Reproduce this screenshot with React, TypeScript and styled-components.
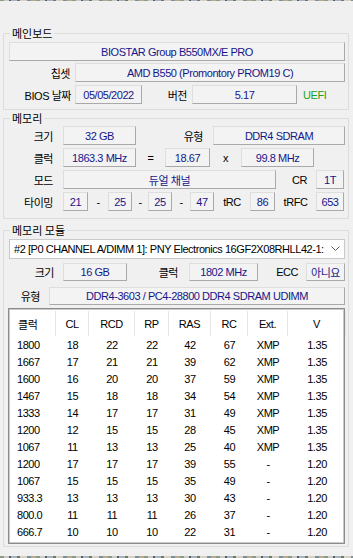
import React from "react";
import styled, { createGlobalStyle } from "styled-components";

const Global = createGlobalStyle`
  html, body { margin: 0; padding: 0; background: #f0f0f0; }
  body {
    font-family: "Liberation Sans", "Noto Sans CJK KR", sans-serif;
    font-size: 11px;
    letter-spacing: -0.45px;
    color: #000;
  }
  * { box-sizing: border-box; }
`;

const Page = styled.div`
  width: 353px;
  height: 558px;
  display: flex;
  flex-direction: column;
  overflow: hidden;
`;

const Strip = styled.div<{ $h: number }>`
  height: ${(p) => p.$h}px;
  flex: none;
  background: repeating-linear-gradient(
    90deg,
    #8f9a86 0 4px,
    #c9cbc4 4px 9px,
    #56606a 9px 11px,
    #a7b4bd 11px 17px,
    #6f7d5e 17px 20px,
    #d3d0c6 20px 27px,
    #7d8f99 27px 31px,
    #b8a98a 31px 36px
  );
`;

const Content = styled.div`
  flex: 1;
  display: flex;
  flex-direction: column;
  padding: 24px 4px 9px 3px;
`;

const Group = styled.fieldset<{ $mt?: number; $pt: number; $pb: number; $grow?: boolean }>`
  margin: ${(p) => p.$mt ?? 0}px 0 0 0;
  padding: ${(p) => p.$pt}px 3px ${(p) => p.$pb}px 5px;
  border: 1px solid #dcdcdc;
  min-width: 0;
  display: flex;
  flex-direction: column;
  ${(p) => (p.$grow ? "flex: 1; min-height: 0;" : "")}
`;

const Legend = styled.legend`
  padding: 0 2px;
  margin-left: 1px;
  line-height: 16px;
  height: 16px;
  font-family: "Noto Sans CJK KR", sans-serif;
  font-size: 11px;
  letter-spacing: 0;
  color: #000;
`;

const Row = styled.div<{ $h?: number; $mt?: number }>`
  display: flex;
  align-items: center;
  height: ${(p) => p.$h ?? 19}px;
  margin-top: ${(p) => p.$mt ?? 0}px;
  flex: none;
`;

const Field = styled.div<{ $w: number; $h?: number }>`
  width: ${(p) => p.$w}px;
  height: ${(p) => p.$h ?? 19}px;
  flex: none;
  display: flex;
  align-items: center;
  justify-content: center;
  background: #f3f3f3;
  border: 1px solid;
  border-color: #dedede #a9a9a9 #a9a9a9 #dedede;
  color: #16168a;
  white-space: nowrap;
  overflow: hidden;
`;

const Label = styled.span<{ $w: number; $align?: "left" | "center" | "right"; $pr?: number }>`
  width: ${(p) => p.$w}px;
  flex: none;
  text-align: ${(p) => p.$align ?? "right"};
  padding-right: ${(p) => p.$pr ?? 0}px;
  white-space: nowrap;
  color: #000;
`;

const Uefi = styled.span`
  margin-left: 6px;
  color: #1fa01f;
`;

const Select = styled.div`
  height: 20px;
  flex: none;
  display: flex;
  align-items: center;
  background: #fff;
  border: 1px solid #c9c9c9;
  padding-left: 4px;
`;

const SelectText = styled.span`
  flex: 1;
  min-width: 0;
  overflow: hidden;
  white-space: nowrap;
  color: #000;
`;

const Chevron = styled.svg`
  flex: none;
  margin: 0 4px 0 2px;
`;

const Table = styled.div`
  margin-top: 3px;
  margin-left: -1px;
  flex: 1;
  min-height: 0;
  background: #fff;
  border: 1px solid #8c8c8c;
  box-shadow: inset 0 0 0 1px #c8c8c8;
  padding: 1px;
  display: grid;
  grid-template-columns: 46px 33px 46px 34px 42px 37px 40px 58px;
  grid-auto-rows: 17px;
  grid-template-rows: 26px;
  align-content: start;
`;

const HeadCell = styled.div<{ $left?: boolean }>`
  display: flex;
  align-items: center;
  justify-content: ${(p) => (p.$left ? "flex-start" : "center")};
  padding-left: ${(p) => (p.$left ? 8 : 0)}px;
  border-right: 1px solid #e5e5e5;
  margin: 1px 0 0 0;
  white-space: nowrap;
`;

const Cell = styled.div<{ $left?: boolean }>`
  display: flex;
  align-items: center;
  justify-content: ${(p) => (p.$left ? "flex-start" : "center")};
  padding-left: ${(p) => (p.$left ? 7 : 0)}px;
  white-space: nowrap;
`;

const headers = ["클럭", "CL", "RCD", "RP", "RAS", "RC", "Ext.", "V"];

const rows = [
  ["1800", "18", "22", "22", "42", "67", "XMP", "1.35"],
  ["1667", "17", "21", "21", "39", "62", "XMP", "1.35"],
  ["1600", "16", "20", "20", "37", "59", "XMP", "1.35"],
  ["1467", "15", "18", "18", "34", "54", "XMP", "1.35"],
  ["1333", "14", "17", "17", "31", "49", "XMP", "1.35"],
  ["1200", "12", "15", "15", "28", "45", "XMP", "1.35"],
  ["1067", "11", "13", "13", "25", "40", "XMP", "1.35"],
  ["1200", "17", "17", "17", "39", "55", "-", "1.20"],
  ["1067", "15", "15", "15", "35", "49", "-", "1.20"],
  ["933.3", "13", "13", "13", "30", "43", "-", "1.20"],
  ["800.0", "11", "11", "11", "26", "37", "-", "1.20"],
  ["666.7", "10", "10", "10", "22", "31", "-", "1.20"],
];

export default function App() {
  return (
    <Page>
      <Global />
      <Strip $h={1} />
      <Content>
        <Group $pt={1} $pb={5}>
          <Legend>메인보드</Legend>
          <Row>
            <Field $w={336}>BIOSTAR Group B550MX/E PRO</Field>
          </Row>
          <Row $mt={2}>
            <Label $w={66} $pr={5}>칩셋</Label>
            <Field $w={270}>AMD B550 (Promontory PROM19 C)</Field>
          </Row>
          <Row $mt={3}>
            <Label $w={66} $pr={4}>BIOS 날짜</Label>
            <Field $w={67}>05/05/2022</Field>
            <Label $w={50} $pr={5}>버전</Label>
            <Field $w={105}>5.17</Field>
            <Uefi>UEFI</Uefi>
          </Row>
        </Group>

        <Group $pt={0} $pb={7}>
          <Legend>메모리</Legend>
          <Row>
            <Label $w={54} $pr={10}>크기</Label>
            <Field $w={73}>32 GB</Field>
            <Label $w={77} $pr={10}>유형</Label>
            <Field $w={132}>DDR4 SDRAM</Field>
          </Row>
          <Row $mt={3}>
            <Label $w={54} $pr={10}>클럭</Label>
            <Field $w={73}>1863.3 MHz</Field>
            <Label $w={29} $align="center">=</Label>
            <Field $w={45}>18.67</Field>
            <Label $w={31} $align="center">x</Label>
            <Field $w={73}>99.8 MHz</Field>
          </Row>
          <Row $mt={3}>
            <Label $w={54} $pr={10}>모드</Label>
            <Field $w={213}>듀얼 채널</Field>
            <Label $w={40} $pr={9}>CR</Label>
            <Field $w={28}>1T</Field>
          </Row>
          <Row $mt={3}>
            <Label $w={54} $pr={10}>타이밍</Label>
            <Field $w={25}>21</Field>
            <Label $w={20} $align="center">-</Label>
            <Field $w={24}>25</Field>
            <Label $w={16} $align="center">-</Label>
            <Field $w={24}>25</Field>
            <Label $w={18} $align="center">-</Label>
            <Field $w={24}>47</Field>
            <Label $w={36} $align="center">tRC</Label>
            <Field $w={25}>86</Field>
            <Label $w={41} $align="center">tRFC</Label>
            <Field $w={28}>653</Field>
          </Row>
        </Group>

        <Group $mt={3} $pt={1} $pb={2} $grow>
          <Legend>메모리 모듈</Legend>
          <Select>
            <SelectText>#2 [P0 CHANNEL A/DIMM 1]: PNY Electronics 16GF2X08RHLL42-1:</SelectText>
            <Chevron width="9" height="6" viewBox="0 0 9 6">
              <polyline points="0.5,0.5 4.5,4.5 8.5,0.5" fill="none" stroke="#5a5a5a" strokeWidth="1" />
            </Chevron>
          </Select>
          <Row $h={18} $mt={4}>
            <Label $w={54} $pr={9}>크기</Label>
            <Field $w={64} $h={18}>16 GB</Field>
            <Label $w={62} $pr={11}>클럭</Label>
            <Field $w={69} $h={18}>1802 MHz</Field>
            <Label $w={48} $pr={8}>ECC</Label>
            <Field $w={39} $h={18}>아니요</Field>
          </Row>
          <Row $h={18} $mt={6}>
            <Label $w={40} $pr={9}>유형</Label>
            <Field $w={296} $h={18}>DDR4-3603 / PC4-28800 DDR4 SDRAM UDIMM</Field>
          </Row>
          <Table>
            {headers.map((h, i) => (
              <HeadCell key={h} $left={i === 0}>{h}</HeadCell>
            ))}
            {rows.map((r, ri) =>
              r.map((v, ci) => (
                <Cell key={`${ri}-${ci}`} $left={ci === 0}>{v}</Cell>
              ))
            )}
          </Table>
        </Group>
      </Content>
      <Strip $h={2} />
    </Page>
  );
}
